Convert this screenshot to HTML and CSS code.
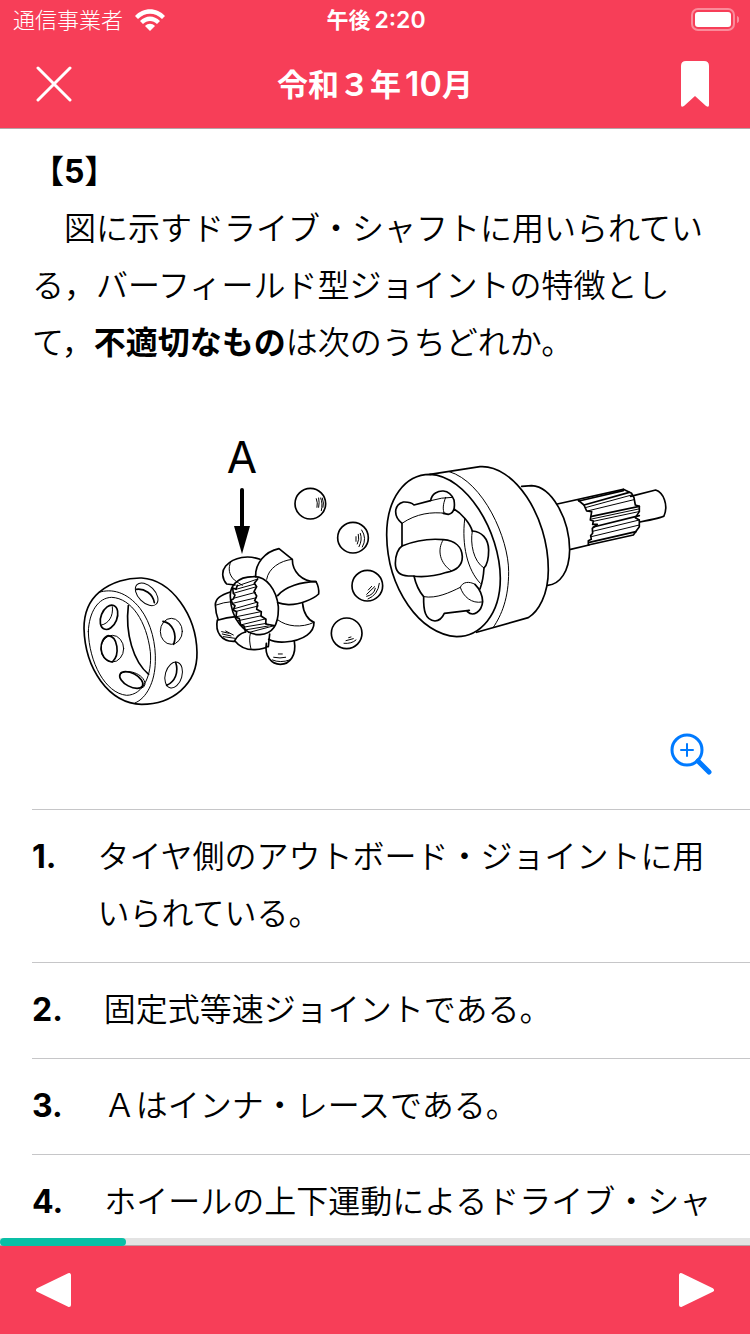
FILE: index.html
```html
<!DOCTYPE html>
<html lang="ja">
<head>
  <meta charset="UTF-8">
  <meta name="viewport" content="width=device-width, initial-scale=1.0">
  <title>令和３年10月</title>
  <link rel="stylesheet" href="styles.css">
</head>
<body>
  <header class="header">
    <div class="status-bar">
      <div class="carrier">
        <span>通信事業者</span>
        <svg class="wifi" viewBox="0 0 30 22" aria-hidden="true">
          <path d="M0 7 C8 -2 22 -2 30 7 L27 10 C20 3 10 3 3 10 Z"/>
          <path d="M5 12 C11 6 19 6 25 12 L22 15 C18 11 12 11 8 15 Z"/>
          <path d="M10 17 C13 14 17 14 20 17 L15 22 Z"/>
        </svg>
      </div>
      <div class="clock">午後<span class="latin">2:20</span></div>
      <svg class="battery" viewBox="0 0 48 24" aria-hidden="true">
        <rect class="battery-case" x="1" y="1" width="42" height="21" rx="6"/>
        <rect x="4" y="4" width="36" height="15" rx="3"/>
        <path class="battery-cap" d="M46 8 C49 9 49 14 46 15 Z"/>
      </svg>
    </div>
    <div class="nav-bar">
      <button class="icon-btn" type="button" aria-label="閉じる">
        <svg class="close-icon" viewBox="0 0 36 36"><path d="M2 2 L34 34 M34 2 L2 34"/></svg>
      </button>
      <h1 class="title">令和３年<span class="latin">10</span>月</h1>
      <button class="icon-btn" type="button" aria-label="ブックマーク">
        <svg class="bookmark-icon" viewBox="0 0 28 46"><path d="M5 0 H23 Q28 0 28 5 V44 Q28 47 25 45 L14 35 L3 45 Q0 47 0 44 V5 Q0 0 5 0 Z"/></svg>
      </button>
    </div>
  </header>

  <main class="content">
    <section class="question">
      <h2 class="question-number">【5】</h2>
      <p class="question-text">　図に示すドライブ・シャフトに用いられている，バーフィールド型ジョイントの特徴として，<strong>不適切なもの</strong>は次のうちどれか。</p>

      <svg class="figure" viewBox="32 400 686 320" role="img" aria-label="バーフィールド型ジョイント">
        <!-- cage -->
        <g transform="translate(75 565) scale(.3333)">
          <path d="M72 82 C110 50 160 38 200 39 C290 45 364 150 366 262 C368 360 290 418 200 418 C100 415 30 310 27 190 C27 140 45 105 72 82 Z"/>
          <path class="thin" d="M72 82 C110 70 155 80 195 130 C230 175 243 240 241 290 C240 350 215 400 180 414"/>
          <path class="thin" d="M40 200 C42 140 70 98 110 97 C170 100 215 170 226 260 C232 330 205 390 155 391 C90 385 42 290 40 200 Z"/>
          <path d="M160 122 C150 205 175 290 221 328"/>
          <ellipse class="thin" cx="215" cy="88" rx="41" ry="25" transform="rotate(45 215 88)"/>
          <path d="M184 73 C208 70 234 86 238 113"/>
          <ellipse cx="102" cy="157" rx="24" ry="38" transform="rotate(22 102 157)"/>
          <path class="thin" d="M80 180 C100 176 116 154 112 125"/>
          <ellipse class="thin" cx="112" cy="251" rx="34" ry="40"/>
          <path d="M100 212 C128 215 136 268 112 291 M100 212 C70 220 68 285 112 291"/>
          <ellipse cx="169" cy="345" rx="38" ry="20" transform="rotate(28 169 345)"/>
          <path class="thin" d="M136 328 C150 308 210 325 210 358 Q208 368 200 369"/>
          <ellipse class="thin" cx="289" cy="199" rx="33" ry="39"/>
          <path d="M264 169 C293 174 307 208 296 238"/>
          <ellipse class="thin" cx="296" cy="330" rx="25" ry="40" transform="rotate(16 296 330)"/>
          <path d="M302 292 C312 322 300 350 275 361"/>
        </g>

        <!-- label and arrow -->
        <text class="figure-label" x="242" y="473">A</text>
        <path class="arrow-stem" d="M242 490 V528"/>
        <path class="solid" d="M234 526 H250 L242 554 Z"/>

        <!-- inner race -->
        <g transform="translate(205 430) scale(.3333)">
          <path d="M165 388 C130 375 88 380 62 408 C48 425 52 448 65 462 L90 465"/>
          <path class="thin" d="M78 394 C68 415 72 435 88 450 Q102 460 112 466"/>
          <path d="M76 500 C74 470 95 440 145 440 C185 438 215 480 220 530 C222 590 200 612 165 614 C120 615 78 570 76 500 Z"/>
          <path d="M152 440 C150 400 180 365 222 356 L262 388 C262 425 290 455 333 455 Q343 472 341 492 C325 507 285 525 250 524 Q232 523 218 518"/>
          <path class="thin" d="M262 388 C225 392 190 415 185 448"/>
          <path d="M333 455 C290 455 240 470 218 497"/>
          <path d="M293 521 C295 550 310 570 327 577 C328 605 300 632 240 636 Q210 638 191 628"/>
          <path class="thin" d="M327 577 C290 595 245 590 219 570"/>
          <path d="M184 640 C178 680 200 703 226 703 C255 703 275 675 268 634"/>
          <path d="M121 606 Q98 613 89 632 C105 652 128 660 150 659 Q178 657 187 650 M190 650 L194 612"/>
          <path class="thin" d="M136 610 C132 625 134 640 138 657"/>
          <path d="M37 570 C30 605 48 636 89 634"/>
          <path d="M76 486 C48 495 31 505 31 525 Q32 550 40 570 Q65 563 92 560"/>
          <path class="thin" d="M34 525 Q55 517 80 515"/>
          <path class="thin" d="M97 468 L158 447 M93 478 L150 462 M85 490 L155 470 M85 505 L152 487 M83 520 L155 503 M85 537 L155 517 M90 545 L160 528 M95 560 L168 545 M100 572 L170 557 M107 585 L180 567 M113 592 L185 580 M120 600 L190 588 M130 608 L208 587"/>
          <path d="M97 466 L93 478 L83 474 L85 490 L90 495 L85 507 L78 510 L83 522 L90 527 L85 540 L95 545 L93 562 L103 566 L107 585 L117 588 L122 606"/>
          <path d="M158 447 L148 460 L155 470 L147 485 L155 498 L149 512 L158 518 L155 538 L169 545 L168 558 L183 568 L182 582 L207 587"/>
          <path class="thin" d="M50 605 L72 610 M52 612 L78 618 M55 620 L90 625 M62 603 L85 615 M220 672 H232 M206 682 Q226 686 242 682 M202 690 Q226 700 254 690"/>
        </g>

        <!-- balls -->
        <g transform="translate(290 480) scale(.3333)">
          <circle cx="61" cy="71" r="46"/>
          <circle cx="189" cy="173" r="46"/>
          <circle cx="232" cy="317" r="46"/>
          <circle cx="170" cy="460" r="46"/>
          <path class="thin" d="M79 56 Q84 68 81 82 M86 54 Q89 68 86 82 M92 54 Q99 70 94 92 M97 54 Q103 70 99 82"/>
          <path class="thin" d="M215 150 Q232 175 217 201 M211 160 Q218 180 207 200 M205 163 Q209 178 202 192 M198 170 V184"/>
          <path class="thin" d="M268 310 Q264 345 234 357 M256 325 Q252 345 230 349 M254 320 L230 343 M245 319 L235 330"/>
          <path class="thin" d="M162 490 Q185 492 198 480 M168 482 L190 476 M176 473 L183 471"/>
        </g>

        <!-- outer race with flange -->
        <g transform="translate(380 455) scale(.3333)">
          <path d="M20 240 C20 130 75 58 150 58 C260 62 360 230 361 370 C361 480 300 545 230 545 C120 540 22 400 20 240 Z"/>
          <path d="M150 58 L300 35 C400 28 505 180 505 345 C505 420 475 470 445 488 L290 532"/>
          <path class="thin" d="M208 50 C310 80 386 250 386 350 C386 430 365 480 340 517"/>
          <path d="M425 94 L455 92 C515 95 568 190 569 285 C568 350 540 388 503 391"/>
          <path d="M66 205 C40 185 40 150 70 141 Q92 140 102 150 L152 137 C155 115 175 107 190 108 Q212 110 222 135 C226 160 222 175 205 178 L190 175 M222 162 C245 175 270 205 277 228 M66 205 V273"/>
          <path class="thin" d="M66 205 C110 175 155 170 197 175 M152 137 Q185 127 217 127 M197 127 C188 150 188 165 193 175"/>
          <path d="M66 273 C110 255 150 250 190 254 C225 257 246 275 247 305 C247 330 230 346 200 352 C160 365 130 368 97 363 H85 C55 362 46 345 46 325 C46 300 55 280 66 273 Z"/>
          <path class="thin" d="M190 254 C170 285 180 325 213 347"/>
          <path d="M277 228 C305 230 325 250 326 285 Q326 325 312 339 Q310 375 300 402"/>
          <path class="thin" d="M277 228 C270 265 280 320 312 339 M254 193 C245 270 262 345 301 385"/>
          <path d="M102 363 Q110 400 131 425 C130 465 135 495 165 498 Q183 497 193 475 L268 466 L262 470 C280 487 305 470 308 440 Q307 410 285 388"/>
          <path class="thin" d="M131 425 C170 432 210 412 241 397 C250 425 275 447 306 441 M241 397 C247 380 268 378 285 388"/>
        </g>

        <!-- splined shaft -->
        <g transform="translate(510 455) scale(.3333)">
          <path d="M142 147 L340 103 M182 283 L237 270 M362 124 L437 105 C460 112 476 150 462 183 Q456 188 390 201"/>
          <path d="M205 136 L222 150 L230 168 L245 170 L243 182 L241 195 L250 198 L248 208 L262 208 L247 220 L248 235 L242 242 L244 253 L235 257 L235 270 L370 240 L388 215 L388 195 L376 188 L388 170 L388 154 L376 150 L372 128 L365 115 L340 103"/>
          <path d="M222 150 L358 112 M245 184 L388 154 M250 216 L388 182 M238 262 L378 230 M207 138 L340 107"/>
          <path class="thin" d="M226 158 L365 120 M232 168 L372 134 M245 192 L386 162 M250 199 L386 170 M248 229 L388 195 M244 245 L388 210"/>
        </g>
      </svg>

      <div class="figure-tools">
        <button class="zoom-btn" type="button" aria-label="図を拡大">
          <svg class="zoom-icon" viewBox="0 0 42 42"><circle cx="17" cy="17" r="15"/><path class="zoom-plus" d="M17 11 V23 M11 17 H23"/><path class="zoom-handle" d="M28 28 L39 39"/></svg>
        </button>
      </div>
    </section>

    <ol class="choices">
      <li class="choice"><span class="choice-number">1.</span><span class="choice-text">タイヤ側のアウトボード・ジョイントに用いられている。</span></li>
      <li class="choice"><span class="choice-number">2.</span><span class="choice-text">固定式等速ジョイントである。</span></li>
      <li class="choice"><span class="choice-number">3.</span><span class="choice-text">Ａはインナ・レースである。</span></li>
      <li class="choice"><span class="choice-number">4.</span><span class="choice-text">ホイールの上下運動によるドライブ・シャ</span></li>
    </ol>
  </main>

  <div class="progress"><div class="progress-value"></div></div>

  <footer class="footer">
    <button class="icon-btn" type="button" aria-label="前へ">
      <svg class="arrow-icon" viewBox="0 0 36 36"><path d="M2 18 L33 3 V33 Z"/></svg>
    </button>
    <button class="icon-btn" type="button" aria-label="次へ">
      <svg class="arrow-icon" viewBox="0 0 36 36"><path d="M34 18 L3 3 V33 Z"/></svg>
    </button>
  </footer>
</body>
</html>
```
FILE: styles.css
```css
* { box-sizing: border-box; margin: 0; padding: 0; }
body {
  height: 100vh;
  display: flex;
  flex-direction: column;
  overflow: hidden;
  background: #fff;
  color: #000;
  font-family: Inter, "Noto Sans CJK JP", sans-serif;
  font-size: 32px;
  line-height: 57px;
}
button {
  background: none;
  border: none;
  cursor: pointer;
}
svg { display: block; }

/* header */
.header {
  flex-shrink: 0;
  background: #f73e58;
  color: #fff;
  border-bottom: 1px solid #b4a5a7;
}
.status-bar {
  height: 40px;
  padding: 0 11px 0 13px;
  display: grid;
  grid-template-columns: 1fr auto 1fr;
  align-items: center;
  font-size: 22px;
  line-height: 40px;
}
.carrier {
  display: flex;
  align-items: center;
  gap: 12px;
  font-weight: 300;
}
.wifi { width: 30px; height: 22px; fill: #fff; }
.clock { font-weight: 600; }
.clock .latin { margin-left: 4px; font-size: 23px; }
.battery {
  width: 48px;
  height: 24px;
  justify-self: end;
  fill: #fff;
}
.battery-case {
  fill: none;
  stroke: #fff;
  stroke-width: 2;
  opacity: 0.4;
}
.battery-cap { opacity: 0.4; }

.nav-bar {
  height: 88px;
  padding: 0 36px;
  display: grid;
  grid-template-columns: 1fr auto 1fr;
  align-items: center;
}
.icon-btn { justify-self: start; }
.icon-btn:last-child { justify-self: end; }
.close-icon {
  width: 36px;
  height: 36px;
  fill: none;
  stroke: #fff;
  stroke-width: 3;
  stroke-linecap: round;
}
.bookmark-icon { width: 38px; height: 46px; fill: #fff; }
.title {
  font-size: 31px;
  font-weight: 600;
}
.title .latin { margin-left: 4px; font-size: 34px; }

/* question */
.content {
  flex: 1;
  min-height: 0;
  overflow: hidden;
  font-weight: 350;
}
.question { padding: 14px 32px 34px; }
.question-number {
  font-size: 32px;
  font-weight: 700;
}
.question-text { margin-bottom: 29px; }
.question-text strong { font-weight: 700; }
.figure {
  width: 100%;
  fill: #fff;
  stroke: #000;
  stroke-width: 5;
  stroke-linejoin: round;
  stroke-linecap: round;
}
.figure path { fill: none; }
.figure .thin { stroke-width: 3; }
.figure .solid { fill: #000; stroke: none; }
.figure .arrow-stem { stroke-width: 4; }
.figure-label {
  fill: #000;
  stroke: none;
  font-size: 44px;
  font-weight: 400;
  text-anchor: middle;
}
.figure-tools {
  display: flex;
  justify-content: flex-end;
  padding: 13px 6px 0;
}
.zoom-icon {
  width: 42px;
  height: 42px;
  fill: none;
  stroke: #007aff;
  stroke-width: 3;
  stroke-linecap: round;
}
.zoom-plus { stroke-width: 2; }
.zoom-handle { stroke-width: 5; }

/* choices */
.choices {
  list-style: none;
  padding-left: 32px;
}
.choice {
  display: flex;
  gap: 41px;
  padding: 18px 32px 20px 0;
  border-top: 1px solid #c6c6c8;
}
.choice-number { font-weight: 700; }

/* progress and pager */
.progress {
  flex-shrink: 0;
  height: 8px;
  background: #e3e3e3;
  border-bottom: 1px solid #b4a5a7;
}
.progress-value {
  width: 16.8%;
  height: 8px;
  border-radius: 4px;
  background: #0abfa6;
}
.footer {
  flex-shrink: 0;
  height: 88px;
  padding: 0 36px;
  display: flex;
  align-items: center;
  justify-content: space-between;
  background: #f73e58;
}
.arrow-icon {
  width: 36px;
  height: 36px;
  fill: #fff;
  stroke: #fff;
  stroke-width: 4;
  stroke-linejoin: round;
}
```
